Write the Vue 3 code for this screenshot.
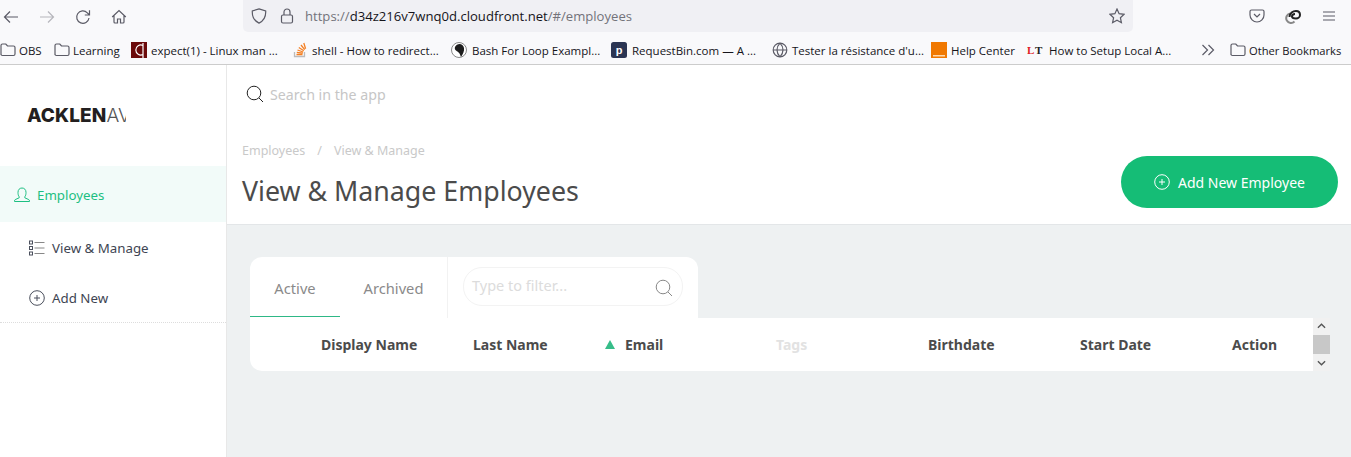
<script setup>
const bookmarks = [
  { label: 'OBS', icon: 'folder', w: 54, gap: 2 },
  { label: 'Learning', icon: 'folder', w: 77, gap: 2 },
  { label: 'expect(1) - Linux man ...', icon: 'die', w: 161, gap: 3 },
  { label: 'shell - How to redirect...', icon: 'so', w: 159, gap: 3 },
  { label: 'Bash For Loop Exampl...', icon: 'bash', w: 160, gap: 4 },
  { label: 'RequestBin.com — A ...', icon: 'p', w: 161, gap: 4 },
  { label: 'Tester la résistance d\'u...', icon: 'globe', w: 159, gap: 3 },
  { label: 'Help Center', icon: 'orange', w: 96, gap: 3 },
  { label: 'How to Setup Local A...', icon: 'lt', w: 173, gap: 5 }
]
const columns = [
  { label: 'Display Name', w: 152 },
  { label: 'Last Name', w: 132 },
  { label: 'Email', w: 171, sorted: true },
  { label: 'Tags', w: 152, muted: true },
  { label: 'Birthdate', w: 152 },
  { label: 'Start Date', w: 152 },
  { label: 'Action', w: 80 }
]
</script>

<template>
  <div class="page">
    <div class="browser">
      <div class="toolbar">
        <div class="nav">
          <svg class="ic" viewBox="0 0 16 16"><path d="M15 8H1.500M7 2.500 1.500 8 7 13.500" /></svg>
          <svg class="ic off" viewBox="0 0 16 16"><path d="M1 8h13.500M9 2.500 14.500 8 9 13.500" /></svg>
          <svg class="ic" viewBox="0 0 16 16"><path d="M14 9a6.200 6.200 0 1 1-1.700-5.200L14.500 6M14.500 1.200V6H9.800" /></svg>
          <svg class="ic" viewBox="0 0 16 16"><path d="M1.200 8 8 1.500 14.800 8M3 6.500v6.500a1 1 0 0 0 1 1h2.500v-4h3v4H12a1 1 0 0 0 1-1V6.500" /></svg>
        </div>
        <div class="url">
          <svg class="ic shield" viewBox="0 0 16 16"><path d="M8 .9 14.700 3c.3 5.600-1.700 9.800-6.700 12.100C3 12.800 1 8.600 1.300 3Z" /></svg>
          <svg class="ic lock" viewBox="0 0 16 16"><rect x="2.500" y="7" width="11" height="8" rx="1.500" /><path d="M5 7V4a3 3 0 0 1 6 0v3" /></svg>
          <span class="addr"><i>https://</i>d34z216v7wnq0d.cloudfront.net<i>/#/employees</i></span>
          <svg class="ic star" viewBox="0 0 16 16"><path d="m8 1 2.100 4.700 5 .6-3.700 3.400 1 5L8 12.200l-4.400 2.500 1-5L.9 6.300l5-.6Z" /></svg>
        </div>
        <div class="tools">
          <svg class="ic pocket" viewBox="0 0 16 16"><path d="M2.500 2h11A1.500 1.500 0 0 1 15 3.500V7A7 7 0 0 1 1 7V3.500A1.500 1.500 0 0 1 2.500 2ZM5 6l3 3 3-3" /></svg>
          <svg class="ic ext" viewBox="0 0 16 16"><path class="ext-back" d="M5 5.500a4.800 4.800 0 1 0 4.500 8" /><path d="M4.500 9C4.500 5 8 3 11 3s4 2 4 4-2 3.500-4 3.500S7 10 7 8.500 8.500 6 10 6" /></svg>
          <svg class="ic menu" viewBox="0 0 16 16"><path d="M2 4h12M2 8h12M2 12h12" /></svg>
        </div>
      </div>
      <div class="bookmarks">
        <div v-for="b in bookmarks" :key="b.label" class="bm" :style="{ width: b.w + 'px', gap: b.gap + 'px' }">
          <svg v-if="b.icon === 'folder'" class="ic fav" viewBox="0 0 16 16"><path d="M1 13V3.500A1.500 1.500 0 0 1 2.500 2h3.300L7.500 4h6A1.500 1.500 0 0 1 15 5.500V12a1.500 1.500 0 0 1-1.500 1.500h-11A1.500 1.500 0 0 1 1 12" /></svg>
          <svg v-else-if="b.icon === 'die'" class="fav" viewBox="0 0 16 16"><rect width="16" height="16" fill="#6b0a0a" /><path d="M12 3.500A5 5 0 1 0 12 12.500M12 1v15" fill="none" stroke="#fff" stroke-width="1.200" /></svg>
          <svg v-else-if="b.icon === 'so'" class="fav" viewBox="0 0 16 16"><path d="M2.500 10v4.500h10V10" fill="none" stroke="#bcbbbb" stroke-width="1.300" /><path d="M4.500 12.500h6M4.800 10.300l6 .8M5.500 8l5.700 2M6.800 5.500l5 3.200M9 3l3.700 4.700M11.800 1l1.800 5.800" fill="none" stroke="#f48024" stroke-width="1.300" /></svg>
          <svg v-else-if="b.icon === 'bash'" class="fav" viewBox="0 0 16 16"><circle cx="8" cy="8" r="7.500" fill="#fff" stroke="#888" /><path d="M4 5c2-4 8-4 9 1 .5 3-1 6-3 9-1-2-1-4-3-5C6 9 3 8 4 5Z" fill="#1c1c1c" /></svg>
          <svg v-else-if="b.icon === 'p'" class="fav" viewBox="0 0 16 16"><rect width="16" height="16" rx="2.500" fill="#2b3553" /><text x="8" y="12" font-size="11" font-weight="700" fill="#fff" text-anchor="middle" font-family="Liberation Sans, sans-serif">p</text></svg>
          <svg v-else-if="b.icon === 'globe'" class="ic fav" viewBox="0 0 16 16"><circle cx="8" cy="8" r="6.800" /><path d="M1.200 8h13.600M8 1.200c-4 4-4 9.600 0 13.600M8 1.200c4 4 4 9.600 0 13.600" /></svg>
          <svg v-else-if="b.icon === 'orange'" class="fav" viewBox="0 0 16 16"><rect width="16" height="16" fill="#f07800" /><rect x="2" y="13" width="12" height="1.500" fill="#ffd9ad" /></svg>
          <svg v-else class="fav" viewBox="0 0 16 16"><text x="0" y="12" font-size="11" font-weight="700" fill="#e01b22" font-family="Liberation Serif, serif">L</text><text x="8" y="12" font-size="11" font-weight="700" fill="#222" font-family="Liberation Serif, serif">T</text></svg>
          <span>{{ b.label }}</span>
        </div>
        <svg class="ic more" viewBox="0 0 16 16"><path d="m2.500 3 5 5-5 5M8.500 3l5 5-5 5" /></svg>
        <div class="bm other">
          <svg class="ic fav" viewBox="0 0 16 16"><path d="M1 13V3.500A1.500 1.500 0 0 1 2.500 2h3.300L7.500 4h6A1.500 1.500 0 0 1 15 5.500V12a1.500 1.500 0 0 1-1.500 1.500h-11A1.500 1.500 0 0 1 1 12" /></svg>
          <span>Other Bookmarks</span>
        </div>
      </div>
    </div>

    <div class="app">
      <aside class="sidebar">
        <div class="logo"><div class="logo-clip"><b>ACKLEN</b><span>AVENUE</span></div></div>
        <div class="side-active">
          <svg class="line user" viewBox="0 0 16 16"><path d="M5.200 9.800C4.200 8.600 4 7 4 5.300 4 2.800 5.600 1 8 1s4 1.800 4 4.300c0 1.700-.2 3.300-1.200 4.500v1l4 1.800c.5.300.7.700.7 1.400v.5H.5v-.5c0-.7.2-1.100.7-1.400l4-1.800Z" /></svg>
          Employees
        </div>
        <div class="side-item">
          <svg class="line" viewBox="0 0 16 16"><path d="M5.500 2.500h10M5.500 8h10M5.500 13.500h10" stroke="#888" /><rect x=".5" y="1" width="3" height="3" /><rect x=".5" y="6.500" width="3" height="3" /><rect x=".5" y="12" width="3" height="3" /></svg>
          View &amp; Manage
        </div>
        <div class="side-item last">
          <svg class="line" viewBox="0 0 16 16"><circle cx="8" cy="8" r="7.300" /><path d="M8 5v6M5 8h6" /></svg>
          Add New
        </div>
      </aside>

      <main class="content">
        <header class="header">
          <div class="search">
            <svg class="line mag" viewBox="0 0 18 18"><circle cx="8" cy="8" r="6.800" /><path d="m13 13 4 4" /></svg>
            <span>Search in the app</span>
          </div>
          <div class="title-row">
            <div>
              <div class="crumbs"><span>Employees</span><span class="sep">/</span><span>View &amp; Manage</span></div>
              <h1>View &amp; Manage Employees</h1>
            </div>
            <button class="add">
              <svg class="line" viewBox="0 0 16 16"><circle cx="8" cy="8" r="7.300" /><path d="M8 5v6M5 8h6" /></svg>
              Add New Employee
            </button>
          </div>
        </header>

        <section class="body">
          <div class="tabs">
            <div class="tab active">Active</div>
            <div class="tab archived">Archived</div>
            <div class="filter-wrap">
              <div class="filter">
                <span>Type to filter...</span>
                <svg class="line" viewBox="0 0 18 18"><circle cx="8" cy="8" r="6.800" /><path d="m13 13 4 4" /></svg>
              </div>
            </div>
          </div>
          <div class="table-row">
            <div class="thead">
              <div v-for="c in columns" :key="c.label" class="th" :class="{ muted: c.muted }" :style="{ width: c.w + 'px' }">
                <i v-if="c.sorted" class="sort"></i>{{ c.label }}
              </div>
            </div>
            <div class="scroll">
              <svg viewBox="0 0 10 6"><path d="m1 5 4-4 4 4" /></svg>
              <div class="thumb"></div>
              <svg viewBox="0 0 10 6"><path d="m1 1 4 4 4-4" /></svg>
            </div>
          </div>
        </section>
      </main>
    </div>
  </div>
</template>

<style>
html, body { margin: 0; overflow: hidden; background: #fff; }
</style>

<style scoped>
.page { width: 1351px; height: 457px; display: flex; flex-direction: column; overflow: hidden; font-family: "Noto Sans", "Open Sans", sans-serif; }
.browser { height: 65px; background: #f9f9fb; border-bottom: 1px solid #ccc; box-sizing: border-box; font-family: "Open Sans", sans-serif; color: #15141a; }
.ic { fill: none; stroke: #5b5b66; stroke-width: 1.200; width: 16px; height: 16px; flex: none; }
.off { stroke: #b6b6bc; }
.toolbar { height: 33px; display: flex; align-items: flex-start; }
.nav { width: 243px; height: 33px; display: flex; align-items: center; gap: 20px; padding: 0 0 0 3px; box-sizing: border-box; }
.url { width: 890px; height: 32px; background: #f0f0f4; border-radius: 0 0 5px 5px; display: flex; align-items: center; padding: 0 8px; box-sizing: border-box; gap: 12px; }
.addr { flex: 1; font-size: 13.100px; color: #15141a; margin-left: -2px; }
.addr i { font-style: normal; color: #73737a; }
.tools { flex: 1; display: flex; gap: 20px; align-items: center; height: 32px; padding-left: 116px; }
.ext { stroke: #222; stroke-width: 2; }
.ext-back { stroke: #888; }
.bookmarks { height: 31px; display: flex; align-items: center; font-size: 11.500px; padding-top: 3px; box-sizing: border-box; }
.bm { display: flex; align-items: center; gap: 2px; white-space: nowrap; flex: none; }
.fav { width: 16px; height: 16px; flex: none; margin-right: 1px; }
.other { margin-left: 14px; font-size: 11.200px; }
.app { flex: 1; display: flex; min-height: 0; }
.sidebar { width: 227px; box-sizing: border-box; border-right: 1px solid #e8e8e8; background: #fff; flex: none; font-size: 13.300px; color: #3e4552; }
.logo { height: 101px; padding: 41px 0 0 27px; box-sizing: border-box; }
.logo-clip { width: 99px; overflow: hidden; white-space: nowrap; font-family: "Inter", "Liberation Sans", sans-serif; font-size: 19px; line-height: 20px; color: #231f20; letter-spacing: .1px; }
.logo-clip b { font-weight: 800; }
.logo-clip span { font-weight: 300; color: #555; }
.side-active { height: 56px; background: #f2fbf9; color: #1dbf82; display: flex; align-items: center; gap: 7px; padding: 2px 0 0 14px; box-sizing: border-box; }
.line { fill: none; stroke: currentColor; stroke-width: 1; width: 16px; height: 16px; flex: none; }
.user { stroke: #1dbf82; }
.side-item { display: flex; align-items: center; gap: 7px; padding: 2px 0 0 29px; height: 50px; box-sizing: border-box; }
.side-item .line { stroke: #4a4f5c; }
.side-item.last { height: 51px; border-bottom: 1px dotted #ddd; }
.content { flex: 1; display: flex; flex-direction: column; min-width: 0; }
.header { height: 160px; background: #fff; border-bottom: 1px solid #e3e6e8; box-sizing: border-box; flex: none; padding: 0 13px 0 15px; }
.search { height: 58px; display: flex; align-items: center; gap: 6px; padding-left: 4px; font-size: 14.200px; color: #c6c6c6; }
.search .mag { stroke: #222; width: 18px; height: 18px; }
.title-row { display: flex; justify-content: space-between; align-items: flex-start; }
.crumbs { display: flex; gap: 12px; font-size: 12.500px; line-height: 16px; color: #c9c9c9; margin-top: 20px; }
h1 { margin: 14px 0 0; font-weight: 400; font-size: 26.750px; line-height: 36px; color: #4b4b4b; }
.add { margin-top: 33px; width: 217px; height: 52px; border: 0; border-radius: 26px; background: #15bd76; color: #fff; font: 400 14px "Noto Sans", sans-serif; display: flex; align-items: center; justify-content: center; gap: 8px; padding: 0; }
.add .line { stroke: #fff; }
.body { flex: 1; background: #eef1f2; padding: 32px 0 0 23px; }
.tabs { width: 448px; height: 61px; background: #fff; border-radius: 12px 12px 0 0; display: flex; }
.tab { height: 60px; line-height: 63px; font-size: 14.700px; color: #8a8a8a; box-sizing: border-box; text-align: center; }
.tab.active { width: 90px; border-bottom: 1px solid #2eb886; }
.tab.archived { width: 107px; }
.filter-wrap { border-left: 1px solid #f2f2f2; flex: 1; padding: 10px 15px 0; }
.filter { height: 37px; border: 1px solid #f3f3f3; border-radius: 19px; display: flex; align-items: center; justify-content: space-between; padding: 0 9px 0 8px; font-size: 14.500px; color: #dcdcdc; }
.filter span { margin-bottom: 3px; }
.filter .line { stroke: #888; width: 18px; height: 18px; margin-top: 2px; }
.table-row { display: flex; align-items: stretch; height: 53px; }
.thead { width: 1063px; background: #fff; border-radius: 0 0 0 12px; display: flex; padding-left: 71px; box-sizing: border-box; align-items: center; font-size: 14px; font-weight: 700; color: #4b4b4b; }
.th { flex: none; white-space: nowrap; display: flex; align-items: center; }
.th.muted { color: #e2e2e2; }
.sort { width: 0; height: 0; border-left: 5px solid transparent; border-right: 5px solid transparent; border-bottom: 9px solid #36bd89; margin-right: 10px; }
.scroll { width: 17px; background: #f1f1f1; display: flex; flex-direction: column; align-items: center; justify-content: space-between; padding: 5px 0; box-sizing: border-box; }
.scroll svg { width: 9px; height: 6px; fill: none; stroke: #555; stroke-width: 1.500; }
.thumb { width: 17px; height: 19px; background: #c8c8c8; }
</style>
